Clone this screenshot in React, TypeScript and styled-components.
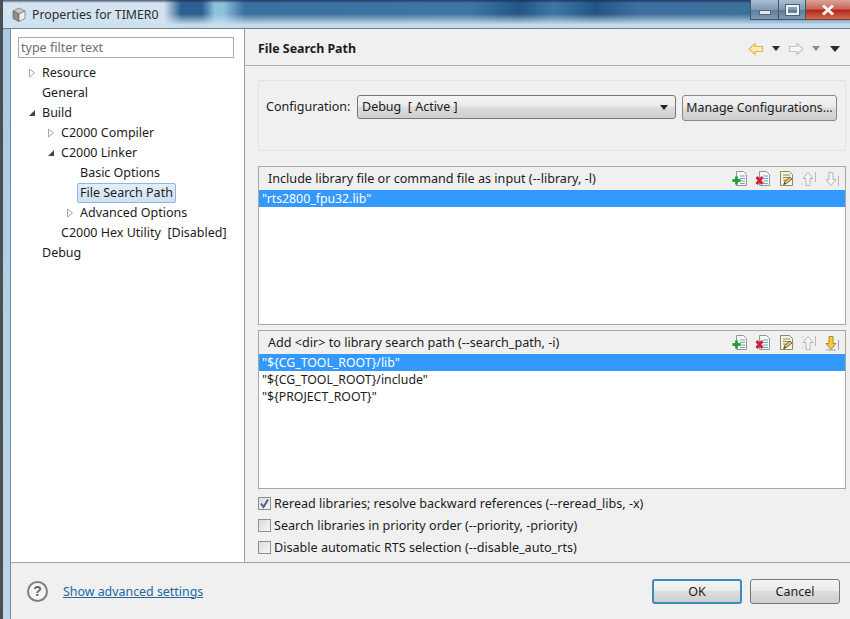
import styled, { createGlobalStyle } from "styled-components";

const GlobalStyle = createGlobalStyle`
  html, body {
    margin: 0;
    padding: 0;
    background: #f0f0f0;
  }
  body {
    font-family: "Noto Sans", "Open Sans", sans-serif;
    font-size: 12.5px;
    color: #1c1c1c;
  }
`;

const treeItems = [
  { label: "Resource", depth: 0, arrow: "closed" },
  { label: "General", depth: 0 },
  { label: "Build", depth: 0, arrow: "open" },
  { label: "C2000 Compiler", depth: 1, arrow: "closed" },
  { label: "C2000 Linker", depth: 1, arrow: "open" },
  { label: "Basic Options", depth: 2 },
  { label: "File Search Path", depth: 2, selected: true },
  { label: "Advanced Options", depth: 2, arrow: "closed" },
  { label: "C2000 Hex Utility  [Disabled]", depth: 1 },
  { label: "Debug", depth: 0 },
];

const DocBase = () => (
  <>
    <path d="M4.5 0.5h7l3 3v11h-10z" fill="#f4f8f6" stroke="#8a9a96" />
    <path d="M8 5h5M8 7.5h5M8 10h5M8 12.5h5" stroke="#7fa3b8" />
  </>
);

const AddIcon = () => (
  <svg width="16" height="16" viewBox="0 0 16 16">
    <DocBase />
    <path d="M4.5 5.5v8M0.5 9.5h8" stroke="#2f9a3a" strokeWidth="2.8" />
  </svg>
);

const DeleteIcon = () => (
  <svg width="16" height="16" viewBox="0 0 16 16">
    <DocBase />
    <path d="M1.5 6l6 7M7.5 6l-6 7" stroke="#d0213a" strokeWidth="2.8" />
  </svg>
);

const EditIcon = () => (
  <svg width="16" height="16" viewBox="0 0 16 16">
    <path d="M2.5 0.5h9l3 3v11h-12z" fill="#f6f3df" stroke="#8f8a63" />
    <path d="M5 4h7M5 6.5h7M5 9h3" stroke="#8a8a70" />
    <path d="M6 13l1-3 5-4 2 2-5 4z" fill="#e2c458" stroke="#55503a" strokeWidth="0.8" />
    <path d="M5 14l1.5-2 1.5 1z" fill="#222" />
  </svg>
);

const UpIcon = () => (
  <svg width="16" height="16" viewBox="0 0 16 16">
    <path d="M7 1.5l5 6h-3v7h-4v-7h-3z" fill="#f7f7f7" stroke="#b4b4b4" />
    <path d="M14.5 1v10" stroke="#b9b9b9" />
    <path d="M1.5 1v2M1.5 12v2" stroke="#cfcfcf" />
  </svg>
);

const DownIcon = ({ active }: { active?: boolean }) => (
  <svg width="16" height="16" viewBox="0 0 16 16">
    <path
      d="M5 1.5h4v7h3l-5 6-5-6h3z"
      fill={active ? "#f6c945" : "#f7f7f7"}
      stroke={active ? "#b58a1e" : "#b4b4b4"}
    />
    <path d="M14.5 5v10" stroke={active ? "#8fa6c0" : "#b9b9b9"} />
    {active && <path d="M2 15h10" stroke="#8fa6c0" />}
  </svg>
);

const NavArrow = ({ dir, active }: { dir: "left" | "right"; active?: boolean }) => (
  <svg width="16" height="14" viewBox="0 0 16 14">
    <path
      d={dir === "left" ? "M1 7l6-5.5v3h7.5v5H7v3z" : "M15 7L9 1.5v3H1.5v5H9v3z"}
      fill={active ? "#fdeeb5" : "#f6f6f6"}
      stroke={active ? "#e2b75a" : "#c4c4c4"}
      strokeWidth="1.2"
    />
  </svg>
);

const ListSection = ({
  title,
  rows,
  selected,
  downActive,
}: {
  title: string;
  rows: string[];
  selected: number;
  downActive?: boolean;
}) => (
  <ListBox>
    <ListHeader>
      <ListTitle>{title}</ListTitle>
      <ToolIcons>
        <AddIcon />
        <DeleteIcon />
        <EditIcon />
        <UpIcon />
        <DownIcon active={downActive} />
      </ToolIcons>
    </ListHeader>
    {rows.map((row, i) => (
      <ListRow key={row} $selected={i === selected}>
        {row}
      </ListRow>
    ))}
  </ListBox>
);

const App = () => {
  return (
    <Frame>
      <GlobalStyle />
      <TitleBar>
        <AppIcon>
          <svg width="16" height="16" viewBox="0 0 16 16">
            <path d="M8 1l6 3-6 3-6-3z" fill="#c9c9c9" stroke="#6e6e6e" strokeWidth="0.7" />
            <path d="M2 4l6 3v7.5l-6-3z" fill="#8d8d8d" stroke="#5c5c5c" strokeWidth="0.7" />
            <path d="M14 4L8 7v7.5l6-3z" fill="#efefef" stroke="#6e6e6e" strokeWidth="0.7" />
          </svg>
        </AppIcon>
        <TitleText>Properties for TIMER0</TitleText>
        <WindowButtons>
          <WinButton $width={28}>
            <MinGlyph />
          </WinButton>
          <WinButton $width={27}>
            <MaxGlyph />
          </WinButton>
          <CloseButton>
            <svg width="14" height="12" viewBox="0 0 14 12">
              <path d="M2 1.5l10 9M12 1.5l-10 9" stroke="#f4f4f4" strokeWidth="3" />
            </svg>
          </CloseButton>
        </WindowButtons>
      </TitleBar>

      <Body>
        <Main>
          <Sidebar>
            <FilterInput>type filter text</FilterInput>
            <Tree>
              {treeItems.map((item) => (
                <TreeRow key={item.label} $depth={item.depth}>
                  <Twisty>
                    {item.arrow === "closed" && (
                      <svg width="8" height="10" viewBox="0 0 8 10">
                        <path d="M1.5 1l5 4-5 4z" fill="#fff" stroke="#a6a6a6" />
                      </svg>
                    )}
                    {item.arrow === "open" && (
                      <svg width="8" height="8" viewBox="0 0 8 8">
                        <path d="M7 1v6H1z" fill="#444" />
                      </svg>
                    )}
                  </Twisty>
                  <TreeLabel $selected={item.selected}>{item.label}</TreeLabel>
                </TreeRow>
              ))}
            </Tree>
          </Sidebar>

          <Content>
            <PageHeader>
              <PageTitle>File Search Path</PageTitle>
              <NavTools>
                <NavArrow dir="left" active />
                <Caret />
                <NavArrow dir="right" />
                <Caret $muted />
                <MenuCaret />
              </NavTools>
            </PageHeader>

            <PageBody>
              <ConfigGroup>
                <ConfigLabel>Configuration:</ConfigLabel>
                <ConfigSelect>
                  <span>Debug&nbsp;&nbsp;[ Active ]</span>
                  <SelectCaret />
                </ConfigSelect>
                <ManageButton>Manage Configurations...</ManageButton>
              </ConfigGroup>

              <ListSection
                title="Include library file or command file as input (--library, -l)"
                rows={['"rts2800_fpu32.lib"']}
                selected={0}
              />
              <SecondList>
                <ListSection
                  title="Add <dir> to library search path (--search_path, -i)"
                  rows={['"${CG_TOOL_ROOT}/lib"', '"${CG_TOOL_ROOT}/include"', '"${PROJECT_ROOT}"']}
                  selected={0}
                  downActive
                />
              </SecondList>

              <Checks>
                <CheckRow>
                  <CheckBox>
                    <svg width="11" height="11" viewBox="0 0 11 11">
                      <path d="M2 5.5l2.5 3.5L9 1.5" fill="none" stroke="#4a5f96" strokeWidth="2" />
                    </svg>
                  </CheckBox>
                  Reread libraries; resolve backward references (--reread_libs, -x)
                </CheckRow>
                <CheckRow>
                  <CheckBox />
                  Search libraries in priority order (--priority, -priority)
                </CheckRow>
                <CheckRow>
                  <CheckBox />
                  Disable automatic RTS selection (--disable_auto_rts)
                </CheckRow>
              </Checks>
            </PageBody>
          </Content>
        </Main>

        <Footer>
          <HelpIcon>?</HelpIcon>
          <AdvancedLink>Show advanced settings</AdvancedLink>
          <FooterButtons>
            <DialogButton $primary>OK</DialogButton>
            <DialogButton>Cancel</DialogButton>
          </FooterButtons>
        </Footer>
      </Body>
    </Frame>
  );
};
export default App;

const Frame = styled.div`
  width: 850px;
  height: 619px;
  overflow: hidden;
  display: flex;
  flex-direction: column;
  box-sizing: border-box;
  border-left: 3px solid #4a4f55;
  background: linear-gradient(180deg, #a9c9e2 0%, #bcd6ea 100%);
`;

const TitleBar = styled.div`
  height: 29px;
  flex: none;
  display: flex;
  align-items: flex-start;
  box-sizing: border-box;
  padding-left: 8px;
  background:
    linear-gradient(180deg, rgba(20, 40, 70, 0.75) 0, rgba(20, 40, 70, 0) 3px, rgba(205, 225, 240, 0) 50%, rgba(205, 225, 240, 0.95) 88%),
    linear-gradient(90deg, #d5e3ee 0, #d5e3ee 19%, #2f5f90 21%, #2f5f90 23.5%, #8fc0dc 25%, #8fc0dc 26%, #3a6f9f 28.5%, #3f76a6 55%, #235584 61%, #3f76a6 65%, #235584 70%, #3c6f9f 75%, #3f7099 100%);
  border-bottom: 1px solid #6f8295;
`;

const AppIcon = styled.span`
  margin-top: 7px;
  height: 16px;
`;

const TitleText = styled.span`
  margin: 6px 0 0 5px;
  font-size: 12.3px;
  line-height: 18px;
  color: #2a2f33;
`;

const WindowButtons = styled.div`
  margin-left: auto;
  display: flex;
  height: 20px;
`;

const WinButton = styled.div<{ $width: number }>`
  width: ${({ $width }) => $width}px;
  display: flex;
  align-items: center;
  justify-content: center;
  box-sizing: border-box;
  border: 1px solid #3c5570;
  border-top: none;
  border-right: none;
  background: linear-gradient(180deg, #a9bfd2 0, #7f9ab3 50%, #5d7a96 52%, #7f9ab3 100%);
`;

const MinGlyph = styled.span`
  width: 10px;
  height: 3px;
  margin-top: 6px;
  background: #dfe7ee;
  border: 1px solid #55687c;
`;

const MaxGlyph = styled.span`
  width: 9px;
  height: 6px;
  border: 2px solid #eef2f6;
  outline: 1px solid #4e6277;
`;

const CloseButton = styled.div`
  width: 45px;
  display: flex;
  align-items: center;
  justify-content: center;
  box-sizing: border-box;
  border-left: 1px solid #3c5570;
  border-bottom: 1px solid #7c3a30;
  background: linear-gradient(180deg, #d8a49a 0, #c8685a 45%, #b5291a 55%, #cf6a4e 100%);
`;

const Body = styled.div`
  flex: 1;
  min-height: 0;
  margin-left: 7px;
  display: flex;
  flex-direction: column;
  border-left: 1px solid #7f8a94;
  background: #f0f0f0;
`;

const Main = styled.div`
  flex: none;
  height: 533px;
  display: flex;
  border-bottom: 1px solid #a0a0a0;
`;

const Sidebar = styled.div`
  width: 234px;
  flex: none;
  box-sizing: border-box;
  background: #fff;
  border-right: 1px solid #a0a0a0;
  padding: 8px 10px 0 7px;
`;

const FilterInput = styled.div`
  height: 21px;
  box-sizing: border-box;
  border: 1px solid #a9a9a9;
  padding-left: 2px;
  line-height: 19px;
  color: #6d6d6d;
`;

const Tree = styled.div`
  margin-top: 5px;
`;

const TreeRow = styled.div<{ $depth: number }>`
  height: 20px;
  display: flex;
  align-items: center;
  padding-left: ${({ $depth }) => $depth * 19}px;
`;

const Twisty = styled.span`
  width: 22px;
  padding-left: 10px;
  box-sizing: border-box;
  flex: none;
  display: flex;
  align-items: center;
`;

const TreeLabel = styled.span<{ $selected?: boolean }>`
  white-space: pre;
  line-height: 18px;
  padding: 0 ${({ $selected }) => ($selected ? "2px" : "1px")};
  margin-left: ${({ $selected }) => ($selected ? "-1px" : "0")};
  border: 1px solid ${({ $selected }) => ($selected ? "#8fb7dd" : "transparent")};
  border-radius: 2px;
  background: ${({ $selected }) => ($selected ? "linear-gradient(180deg, #e4eefa, #cfe1f5)" : "none")};
`;

const Content = styled.div`
  flex: 1;
  min-width: 0;
  display: flex;
  flex-direction: column;
`;

const PageHeader = styled.div`
  height: 37px;
  flex: none;
  display: flex;
  align-items: center;
  justify-content: space-between;
  box-sizing: border-box;
  padding: 3px 10px 0 13px;
  border-bottom: 1px solid #b0b0b0;
`;

const PageTitle = styled.div`
  font-weight: 700;
  font-size: 12.4px;
`;

const NavTools = styled.div`
  display: flex;
  align-items: center;
  gap: 8px;
`;

const Caret = styled.span<{ $muted?: boolean }>`
  width: 0;
  height: 0;
  border-left: 4px solid transparent;
  border-right: 4px solid transparent;
  border-top: 5px solid ${({ $muted }) => ($muted ? "#8a8a8a" : "#2b2b33")};
`;

const MenuCaret = styled.span`
  width: 0;
  height: 0;
  margin-left: 2px;
  border-left: 5px solid transparent;
  border-right: 5px solid transparent;
  border-top: 6px solid #2b2b33;
`;

const PageBody = styled.div`
  padding: 14px 4px 0 13px;
  display: flex;
  flex-direction: column;
`;

const ConfigGroup = styled.div`
  height: 71px;
  box-sizing: border-box;
  border: 1px solid #e4e4e4;
  padding: 14px 9px 0 7px;
  display: flex;
  align-items: flex-start;
  margin-bottom: 15px;
`;

const ConfigLabel = styled.span`
  width: 91px;
  flex: none;
  line-height: 24px;
`;

const ConfigSelect = styled.div`
  width: 319px;
  height: 24px;
  flex: none;
  box-sizing: border-box;
  border: 1px solid #767676;
  border-radius: 3px;
  padding: 0 7px 0 4px;
  display: flex;
  align-items: center;
  justify-content: space-between;
  line-height: 20px;
  background: linear-gradient(180deg, #f4f4f4 0, #ebebeb 45%, #dcdcdc 50%, #cfcfcf 100%);
`;

const SelectCaret = styled.span`
  width: 0;
  height: 0;
  border-left: 4px solid transparent;
  border-right: 4px solid transparent;
  border-top: 5px solid #222;
`;

const ManageButton = styled.div`
  margin-left: 6px;
  width: 155px;
  height: 26px;
  flex: none;
  box-sizing: border-box;
  border: 1px solid #8a8a8a;
  border-radius: 3px;
  text-align: center;
  line-height: 23px;
  white-space: nowrap;
  font-size: 12.35px;
  background: linear-gradient(180deg, #f4f4f4 0, #ebebeb 45%, #dcdcdc 50%, #cfcfcf 100%);
`;

const ListBox = styled.div`
  height: 159px;
  box-sizing: border-box;
  border: 1px solid #a8a8a8;
  background: #fff;
`;

const SecondList = styled.div`
  margin-top: 5px;
`;

const ListHeader = styled.div`
  height: 23px;
  display: flex;
  align-items: center;
  justify-content: space-between;
  padding: 0 5px 0 9px;
  background: #f0f0f0;
`;

const ListTitle = styled.span`
  white-space: nowrap;
  font-size: 12.6px;
`;

const ToolIcons = styled.div`
  display: flex;
  gap: 7px;
  margin-top: 1px;
`;

const ListRow = styled.div<{ $selected?: boolean }>`
  height: 17px;
  line-height: 17px;
  padding-left: 3px;
  white-space: nowrap;
  font-size: 12.3px;
  color: ${({ $selected }) => ($selected ? "#fff" : "#1c1c1c")};
  background: ${({ $selected }) => ($selected ? "#3399ff" : "transparent")};
`;

const Checks = styled.div`
  margin-top: 3px;
  display: flex;
  flex-direction: column;
`;

const CheckRow = styled.div`
  height: 22px;
  display: flex;
  align-items: center;
  gap: 3px;
  white-space: nowrap;
  font-size: 12.6px;
`;

const CheckBox = styled.span`
  width: 13px;
  height: 13px;
  flex: none;
  box-sizing: border-box;
  border: 1px solid #8e8f8f;
  background: linear-gradient(135deg, #dcdcdc, #f6f6f6);
  display: flex;
  align-items: center;
  justify-content: center;
`;

const Footer = styled.div`
  flex: 1;
  display: flex;
  align-items: center;
  padding: 0 10px 0 16px;
`;

const HelpIcon = styled.span`
  width: 21px;
  height: 21px;
  box-sizing: border-box;
  border: 2px solid #7d7d85;
  border-radius: 50%;
  display: flex;
  align-items: center;
  justify-content: center;
  font-family: "Liberation Sans", sans-serif;
  font-weight: 700;
  font-size: 14px;
  color: #62626a;
  background: #f7f7f7;
`;

const AdvancedLink = styled.a`
  margin-left: 15px;
  color: #24679e;
  text-decoration: underline;
  font-size: 12.4px;
`;

const FooterButtons = styled.div`
  margin-left: auto;
  display: flex;
  gap: 8px;
`;

const DialogButton = styled.div<{ $primary?: boolean }>`
  width: 90px;
  height: 25px;
  box-sizing: border-box;
  border: ${({ $primary }) => ($primary ? "2px solid #3c8dbc" : "1px solid #777")};
  border-radius: 3px;
  text-align: center;
  line-height: ${({ $primary }) => ($primary ? "21px" : "23px")};
  background: linear-gradient(180deg, #f4f4f4 0, #ebebeb 45%, #dcdcdc 50%, #cfcfcf 100%);
`;
